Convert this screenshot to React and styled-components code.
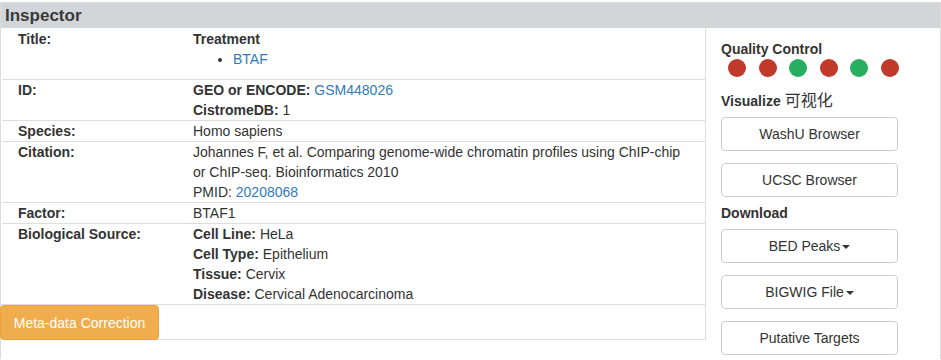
import React from 'react'
import styled, { createGlobalStyle } from 'styled-components'

const Global = createGlobalStyle`
  body {
    margin: 0;
    font-family: "Liberation Sans", Arial, sans-serif;
    font-size: 14px;
    line-height: 20px;
    color: #333;
    background: #fff;
  }
`

const Panel = styled.div`
  margin-top: 2px;
  border: 1px solid #dcdcdc;
  border-bottom: none;
  height: 357px;
  box-sizing: border-box;
  display: flex;
  flex-direction: column;
`

const Header = styled.div`
  background: #d3d6d9;
  height: 25px;
  padding-left: 4px;
  font-size: 17px;
  font-weight: bold;
  line-height: 25px;
  color: #3a3a3a;
`

const Body = styled.div`
  display: flex;
  flex: 1;
`

const Table = styled.div`
  width: 703px;
  align-self: flex-start;
  border-right: 1px solid #ddd;
  border-bottom: 1px solid #ddd;
  margin-left: 1px;
`

const Row = styled.div`
  display: grid;
  grid-template-columns: 175px 1fr;
  border-top: ${(p) => (p.first ? 'none' : '1px solid #ddd')};
  padding-top: ${(p) => (p.first ? 1 : 0)}px;
`

const Label = styled.div`
  padding-left: 16px;
  font-weight: bold;
`

const Value = styled.div`
  padding-left: 16px;
`

const B = styled.b``

const Link = styled.a`
  color: #337ab7;
  text-decoration: none;
`

const List = styled.ul`
  margin: 0 0 10px;
  padding-left: 40px;
`

const FixRow = styled.div`
  border-top: 1px solid #ddd;
  height: 34px;
  margin-left: -2px;
`

const OrangeButton = styled.button`
  background: #f0ad4e;
  border: 1px solid #eea236;
  border-radius: 4px;
  color: #fff;
  font-family: inherit;
  font-size: 14px;
  height: 35px;
  width: 159px;
  padding: 0 12px;
`

const Side = styled.div`
  flex: 1;
  padding: 11px 16px 0 15px;
`

const SideTitle = styled.div`
  font-weight: bold;
  color: #333;
`

const Chinese = styled.span`
  font-weight: normal;
  font-size: 16px;
  font-family: "Liberation Sans", "Noto Sans CJK SC", sans-serif;
  margin-left: 4px;
`

const Dots = styled.div`
  display: flex;
  gap: 12.6px;
  padding-left: 7px;
  margin: 0 0 14px;
`

const Dot = styled.span`
  width: 18px;
  height: 18px;
  border-radius: 50%;
  background: ${(p) => (p.ok ? '#27ae60' : '#c0392b')};
`

const Button = styled.button`
  display: block;
  width: 177px;
  height: 34px;
  margin: ${(p) => (p.first ? '6px' : '12px')} 0 0;
  background: #fff;
  border: 1px solid #ccc;
  border-radius: 4px;
  font-family: inherit;
  font-size: 14px;
  color: #333;
`

const Caret = styled.span`
  display: inline-block;
  width: 0;
  height: 0;
  margin-left: 2px;
  vertical-align: middle;
  border-top: 4px solid #333;
  border-left: 4px solid transparent;
  border-right: 4px solid transparent;
`

const Section = styled.div`
  margin-top: ${(p) => p.gap || 0}px;
`

const qc = [false, false, true, false, true, false]

export default function App() {
  return (
    <>
      <Global />
      <Panel>
        <Header>Inspector</Header>
        <Body>
          <Table>
            <Row first>
              <Label>Title:</Label>
              <Value>
                <B>Treatment</B>
                <List>
                  <li><Link href="#">BTAF</Link></li>
                </List>
              </Value>
            </Row>
            <Row>
              <Label>ID:</Label>
              <Value>
                <div><B>GEO or ENCODE:</B> <Link href="#">GSM448026</Link></div>
                <div><B>CistromeDB:</B> 1</div>
              </Value>
            </Row>
            <Row>
              <Label>Species:</Label>
              <Value>Homo sapiens</Value>
            </Row>
            <Row>
              <Label>Citation:</Label>
              <Value>
                Johannes F, et al. Comparing genome-wide chromatin profiles using ChIP-chip
                <br />
                or ChIP-seq. Bioinformatics 2010
                <br />
                PMID: <Link href="#">20208068</Link>
              </Value>
            </Row>
            <Row>
              <Label>Factor:</Label>
              <Value>BTAF1</Value>
            </Row>
            <Row>
              <Label>Biological Source:</Label>
              <Value>
                <div><B>Cell Line:</B> HeLa</div>
                <div><B>Cell Type:</B> Epithelium</div>
                <div><B>Tissue:</B> Cervix</div>
                <div><B>Disease:</B> Cervical Adenocarcinoma</div>
              </Value>
            </Row>
            <FixRow>
              <OrangeButton>Meta-data Correction</OrangeButton>
            </FixRow>
          </Table>
          <Side>
            <SideTitle>Quality Control</SideTitle>
            <Dots>
              {qc.map((ok, i) => (
                <Dot key={i} ok={ok} />
              ))}
            </Dots>
            <SideTitle>
              Visualize<Chinese>可视化</Chinese>
            </SideTitle>
            <Button first>WashU Browser</Button>
            <Button>UCSC Browser</Button>
            <Section gap={6}>
              <SideTitle>Download</SideTitle>
              <Button first>BED Peaks<Caret /></Button>
              <Button>BIGWIG File<Caret /></Button>
              <Button>Putative Targets</Button>
            </Section>
          </Side>
        </Body>
      </Panel>
    </>
  )
}
